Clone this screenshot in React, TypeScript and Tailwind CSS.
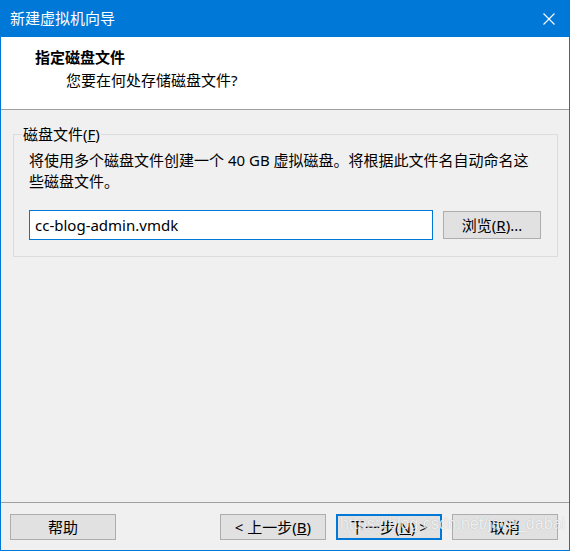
import React from "react";

// Win10-style wizard dialog: 新建虚拟机向导 → 指定磁盘文件
const FONT = { fontFamily: '"Noto Sans", "Noto Sans CJK SC", sans-serif' };

function WinButton({
  children,
  primary,
  className = "",
}: {
  children: React.ReactNode;
  primary?: boolean;
  className?: string;
}) {
  return (
    <button
      className={`flex items-center justify-center bg-[#e1e1e1] text-[15px] leading-none text-black ${
        primary ? "border-2 border-[#0078d7]" : "border border-[#adadad]"
      } ${className}`}
    >
      {children}
    </button>
  );
}

export default function App() {
  return (
    <div
      className="relative flex h-[551px] w-[570px] flex-col border-x border-b border-[#0078d7] bg-[#f0f0f0] text-black"
      style={FONT}
    >
      {/* Title bar */}
      <div className="-mx-px flex h-[37px] shrink-0 items-center justify-between bg-[#0078d7] pl-[10px] pr-[15px]">
        <span className="text-[15px] text-white">新建虚拟机向导</span>
        <svg width="12" height="12" viewBox="0 0 12 12" className="mt-[1px]">
          <path d="M0.5 0.5 L11.5 11.5 M11.5 0.5 L0.5 11.5" stroke="#fff" strokeWidth="1.1" />
        </svg>
      </div>

      {/* Header */}
      <div className="h-[73px] shrink-0 border-b border-[#a0a0a0] bg-white pl-[34px] pt-[10px]">
        <div className="text-[15px] font-bold leading-[20px]">指定磁盘文件</div>
        <div className="mt-[3px] pl-[31px] text-[15px] leading-[20px]">您要在何处存储磁盘文件?</div>
      </div>

      {/* Body */}
      <div className="flex-1 px-3 pt-[14px]">
        <fieldset className="border border-[#dcdcdc] pb-[16px] pl-[15px] pr-[16px]">
          <legend className="-ml-[7px] px-[1px] text-[15px] leading-[20px]">
            磁盘文件(<u>F</u>)
          </legend>
          <div className="mt-[6px] text-[15px] leading-[21px]">
            <span className="block">将使用多个磁盘文件创建一个 40 GB 虚拟磁盘。将根据此文件名自动命名这</span>
            <span className="block">些磁盘文件。</span>
          </div>
          <div className="mt-[18px] flex items-center gap-[10px]">
            <div className="flex h-[30px] w-[404px] items-center border border-[#0078d7] bg-white pl-[5px] text-[15px]">
              cc-blog-admin.vmdk
            </div>
            <WinButton className="h-[28px] w-[98px]">
              浏览(<u>R</u>)...
            </WinButton>
          </div>
        </fieldset>
      </div>

      {/* Footer */}
      <div className="flex h-[48px] shrink-0 items-start border-t border-[#a0a0a0] pl-[9px] pr-[11px] pt-[11px]">
        <WinButton className="h-[26px] w-[106px]">帮助</WinButton>
        <div className="ml-auto flex gap-[10px]">
          <WinButton className="h-[26px] w-[106px]">
            &lt; 上一步(<u>B</u>)
          </WinButton>
          <WinButton primary className="h-[26px] w-[106px]">
            下一步(<u>N</u>) &gt;
          </WinButton>
          <WinButton className="h-[26px] w-[106px]">取消</WinButton>
        </div>
      </div>

      {/* CSDN watermark */}
      <div
        className="pointer-events-none absolute bottom-[14px] right-[4px] text-[16px] text-white/80"
        style={{ fontFamily: '"Liberation Sans", sans-serif', textShadow: "0 0 1px rgba(0,0,0,0.25)" }}
      >
        https://blog.csdn.net/java_dabai
      </div>
    </div>
  );
}
